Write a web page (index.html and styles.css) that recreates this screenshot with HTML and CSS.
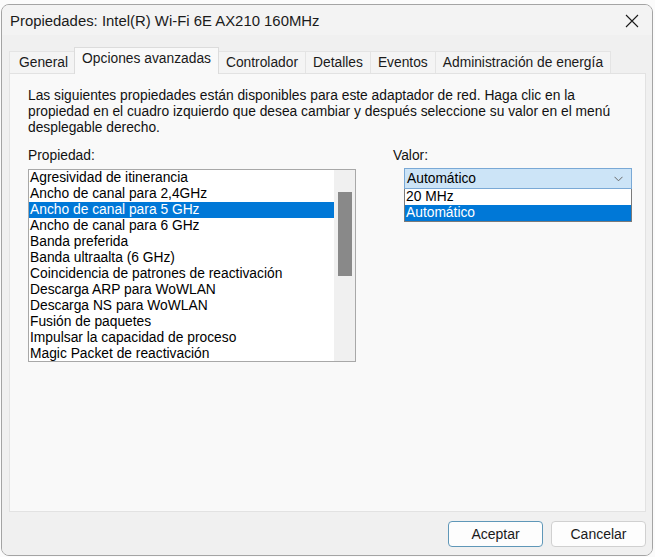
FILE: index.html
```html
<!DOCTYPE html>
<html lang="es">
<head>
<meta charset="utf-8">
<title>Propiedades</title>
<link rel="stylesheet" href="styles.css">
</head>
<body>
<div class="window">
  <div class="titlebar">
    <span class="title">Propiedades: Intel(R) Wi-Fi 6E AX210 160MHz</span>
    <svg class="close" width="14" height="14" viewBox="0 0 14 14"><path d="M1 1 L13 13 M13 1 L1 13" stroke="#1a1a1a" stroke-width="1.1" fill="none"/></svg>
  </div>
  <div class="tabs">
    <div class="tab first">General</div>
    <div class="tab active">Opciones avanzadas</div>
    <div class="tab">Controlador</div>
    <div class="tab">Detalles</div>
    <div class="tab">Eventos</div>
    <div class="tab">Administración de energía</div>
  </div>
  <div class="panel">
    <p class="desc">Las siguientes propiedades están disponibles para este adaptador de red. Haga clic en la<br>propiedad en el cuadro izquierdo que desea cambiar y después seleccione su valor en el menú<br>desplegable derecho.</p>
    <div class="fields">
      <div class="prop-col">
        <div class="label">Propiedad:</div>
        <div class="listbox">
          <ul class="items">
            <li>Agresividad de itinerancia</li>
            <li>Ancho de canal para 2,4GHz</li>
            <li class="sel">Ancho de canal para 5 GHz</li>
            <li>Ancho de canal para 6 GHz</li>
            <li>Banda preferida</li>
            <li>Banda ultraalta (6 GHz)</li>
            <li>Coincidencia de patrones de reactivación</li>
            <li>Descarga ARP para WoWLAN</li>
            <li>Descarga NS para WoWLAN</li>
            <li>Fusión de paquetes</li>
            <li>Impulsar la capacidad de proceso</li>
            <li>Magic Packet de reactivación</li>
          </ul>
          <div class="scrollbar"><div class="thumb"></div></div>
        </div>
      </div>
      <div class="val-col">
        <div class="label">Valor:</div>
        <div class="combo-wrap">
          <div class="combo">
            <span>Automático</span>
            <svg class="chev" width="9" height="6" viewBox="0 0 9 6"><path d="M0.5 0.8 L4.5 4.8 L8.5 0.8" stroke="#6a6a6a" stroke-width="1" fill="none"/></svg>
          </div>
          <div class="dropdown">
            <div class="opt">20 MHz</div>
            <div class="opt sel">Automático</div>
          </div>
        </div>
      </div>
    </div>
  </div>
  <div class="footer">
    <button class="btn default">Aceptar</button>
    <button class="btn">Cancelar</button>
  </div>
</div>
</body>
</html>
```
FILE: styles.css
```css
* { box-sizing: border-box; }
html, body { margin: 0; padding: 0; }
body {
  background: #fbfbfb;
  font-family: "Liberation Sans", Arial, sans-serif;
  color: #000;
  width: 655px;
  height: 557px;
  overflow: hidden;
}
.window {
  margin: 4px 0 0 1px;
  width: 652px;
  height: 552px;
  border: 1px solid #a4a4a4;
  border-radius: 8px;
  background: #f0f0f0;
  display: flex;
  flex-direction: column;
  overflow: hidden;
}
.titlebar {
  height: 30px;
  display: flex;
  align-items: center;
  justify-content: space-between;
  padding: 0 13px 0 8px;
  background: #f3f3f3;
}
.title {
  font-family: "Liberation Sans", Arial, sans-serif;
  font-size: 14.9px;
  color: #1b1b1b;
  padding-top: 1px;
}
.close { display: block; margin-top: 1px; }
.tabs {
  height: 38px;
  display: flex;
  align-items: flex-end;
  padding-left: 7px;
  background: #f0f0f0;
}
.tab {
  height: 22px;
  line-height: 21px;
  padding: 0 7px;
  font-size: 13.8px;
  color: #1a1a1a;
  background: #f4f4f4;
  border: 1px solid #e4e4e4;
  border-bottom: none;
  margin-right: -1px;
}
.tab.first { padding-left: 9px; }
.tab.active {
  height: 27px;
  line-height: 21px;
  padding: 0 7px;
  margin: 0 -1px 0 -1px;
  background: #f9f9f9;
  border-color: #dcdcdc;
  position: relative;
  z-index: 1;
  margin-bottom: -1px;
}
.panel {
  margin: 0 6px 0 7px;
  height: 439px;
  background: #f9f9f9;
  border: 1px solid #e2e2e2;
  padding: 14px 0 0 18px;
}
.desc {
  margin: 0;
  font-size: 13.8px;
  line-height: 16px;
  color: #111;
}
.fields {
  margin-top: 12px;
  display: flex;
  gap: 37px;
}
.label {
  font-size: 13.8px;
  line-height: 16px;
  color: #111;
}
.listbox {
  margin-top: 5px;
  width: 328px;
  height: 193px;
  border: 1px solid #a8a8a8;
  background: #fff;
  display: flex;
  padding: 0;
}
.items {
  list-style: none;
  margin: 0;
  padding: 0;
  width: 305px;
}
.items li {
  height: 16px;
  line-height: 16px;
  font-size: 13.8px;
  padding-left: 1px;
  white-space: nowrap;
  color: #000;
}
.items li.sel {
  background: #0078d7;
  color: #fff;
}
.scrollbar {
  flex: 1;
  background: #f0f0f0;
  padding: 22px 3px 0 4px;
}
.thumb {
  height: 84px;
  background: #898989;
}
.combo-wrap {
  margin: 4px 0 0 11px;
  width: 228px;
  position: relative;
}
.combo {
  height: 21px;
  border: 1px solid #7aa9d6;
  background: #cce4f7;
  display: flex;
  align-items: center;
  justify-content: space-between;
  padding: 0 8px 0 2px;
  font-size: 13.8px;
  color: #000;
}
.chev { display: block; margin-top: 1px; }
.dropdown {
  position: absolute;
  left: 0;
  top: 21px;
  width: 228px;
  border: 1px solid #7a7a7a;
  border-top: none;
  background: #fff;
}
.opt {
  height: 16px;
  line-height: 16px;
  font-size: 13.8px;
  padding-left: 1px;
  color: #000;
}
.opt.sel {
  background: #0078d7;
  color: #fff;
}
.footer {
  flex: 1;
  display: flex;
  justify-content: flex-end;
  align-items: flex-start;
  padding: 9px 6px 0 0;
  gap: 8px;
  background: #f0f0f0;
}
.btn {
  width: 95px;
  height: 26px;
  border: 1px solid #d0d0d0;
  border-radius: 4px;
  background: #fdfdfd;
  font-family: "Liberation Sans", Arial, sans-serif;
  font-size: 14px;
  color: #1a1a1a;
  padding: 0;
}
.btn.default {
  border-color: #5f97b8;
}
```
